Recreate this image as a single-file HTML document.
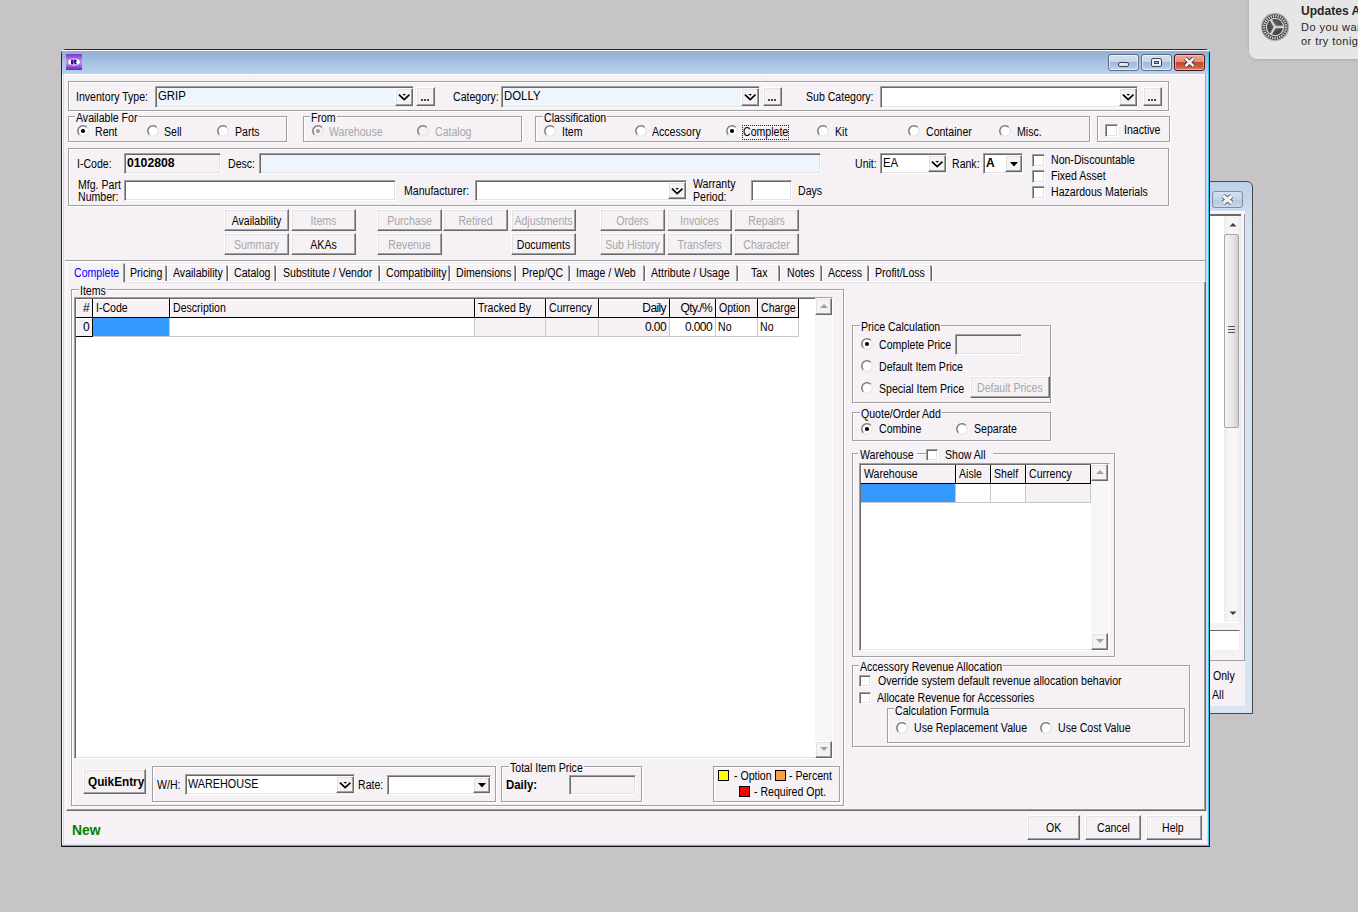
<!DOCTYPE html><html><head><meta charset="utf-8"><style>
html,body{margin:0;padding:0;width:1358px;height:912px;overflow:hidden;background:#c6c4c7;position:relative}
body div,body svg{position:absolute;box-sizing:border-box}
.t{font-family:"Liberation Sans",sans-serif;font-size:12px;line-height:14px;white-space:nowrap;transform-origin:0 0}
</style></head><body>
<div style="left:1249px;top:-10px;width:121px;height:69px;background:#e7e6e7;border-radius:8px;box-shadow:0 1px 3px rgba(0,0,0,.12)"></div>
<svg style="left:1260px;top:12px" width="30" height="30" viewBox="0 0 30 30"><defs><radialGradient id="gr" cx=".5" cy=".4" r=".6"><stop offset="0" stop-color="#6a6a6a"/><stop offset="1" stop-color="#3a3a3a"/></radialGradient></defs><circle cx="15" cy="15" r="14.2" fill="#a9b6bd"/><circle cx="15" cy="15" r="12.8" fill="#3c3c3c"/><circle cx="15" cy="15" r="11" fill="none" stroke="#d6d4ce" stroke-width="2.4" stroke-dasharray="1.3 1.05"/><circle cx="15" cy="15" r="9.3" fill="#cfcdc7"/><circle cx="15" cy="15" r="8" fill="url(#gr)"/><path d="M15 15L23.2 15M15 15L10.9 7.9M15 15L10.9 22.1" stroke="#d2d0ca" stroke-width="2.3"/><circle cx="15" cy="15" r="1.6" fill="#d2d0ca"/></svg>
<div class="t" style="left:1301px;top:4px;color:#262626;font-weight:bold;font-size:13px;transform:scaleX(0.93);">Updates A</div>
<div class="t" style="left:1301px;top:20px;color:#262626;font-size:11px;transform:scaleX(1);letter-spacing:0.45px">Do you war</div>
<div class="t" style="left:1301px;top:34px;color:#262626;font-size:11px;transform:scaleX(1);letter-spacing:0.45px">or try tonig</div>
<div style="left:1190px;top:181px;width:63px;height:533px;background:linear-gradient(#bdd0e6,#d3e2f2 40px,#d6e4f3);border:1px solid #4a4a4a;border-radius:0 6px 0 0"></div>
<div style="left:1212px;top:191px;width:31px;height:17px;background:linear-gradient(#d7e2ef,#c3d3e6 50%,#b6c9df 51%,#c9d8ea);border:1px solid #7d8fa8;border-radius:3px"></div>
<svg style="left:1221px;top:194px" width="13" height="11" viewBox="0 0 13 11"><path d="M2.3 2L10.7 9M10.7 2L2.3 9" stroke="#56606e" stroke-width="5"/><path d="M2.3 2L10.7 9M10.7 2L2.3 9" stroke="#f4f4f4" stroke-width="3.2"/></svg>
<div style="left:1190px;top:211px;width:55px;height:495px;background:#f5f1f5;border-top:1px solid #fff"></div>
<div style="left:1190px;top:214px;width:51px;height:409px;background:#fff;border-top:2px solid #6a6a6a"></div>
<div style="left:1224px;top:216px;width:17px;height:406px;background:linear-gradient(90deg,#ececec,#f6f6f6 30%,#f6f6f6 70%,#ececec)"></div>
<svg style="left:1229px;top:222px" width="8" height="5" viewBox="0 0 8 5"><polygon points="0.5,4.5 4,1 7.5,4.5" fill="#404040"/></svg>
<div style="left:1224px;top:234px;width:15px;height:194px;background:linear-gradient(90deg,#f4f4f4,#e6e6e6 60%,#cfcfcf);border:1px solid #a7a7a7;border-radius:2px"></div>
<div style="left:1228px;top:326px;width:7px;height:1px;background:#555"></div>
<div style="left:1228px;top:329px;width:7px;height:1px;background:#555"></div>
<div style="left:1228px;top:332px;width:7px;height:1px;background:#555"></div>
<svg style="left:1229px;top:611px" width="8" height="5" viewBox="0 0 8 5"><polygon points="0.5,0.5 7.5,0.5 4,4" fill="#404040"/></svg>
<div style="left:1190px;top:630px;width:50px;height:21px;background:#fff;border:1px solid;border-color:#696969 #eee #eee #696969"></div>
<div style="left:1190px;top:660px;width:55px;height:1px;background:#a0a0a0"></div>
<div style="left:1244px;top:214px;width:1px;height:447px;background:#a0a0a0"></div>
<div class="t" style="left:1213px;top:669px;color:#000;font-size:12px;transform:scaleX(0.88);">Only</div>
<div class="t" style="left:1212px;top:688px;color:#000;font-size:12px;transform:scaleX(0.88);">All</div>
<div style="left:61px;top:49px;width:1149px;height:798px;background:#c7ddf2;border:1px solid #1e2a24;border-radius:5px 5px 0 0;border-right-color:#111;border-bottom-color:#111"></div>
<div style="left:62px;top:50px;width:1147px;height:1px;background:#fff"></div>
<div style="left:62px;top:51px;width:1147px;height:23px;background:linear-gradient(#94b0d2,#9ab8d6 25%,#aac5e5 55%,#b3cfea 90%,#b7d2ee)"></div>
<div style="left:1208px;top:51px;width:1px;height:795px;background:#32c8f4"></div>
<div style="left:62px;top:845px;width:1147px;height:1px;background:#32c8f4"></div>
<div style="left:62px;top:74px;width:1146px;height:771px;background:#f5f1f5;border-top:1px solid #fff"></div>
<div style="left:62px;top:74px;width:1px;height:771px;background:#fff"></div>
<div style="left:63px;top:74px;width:1px;height:771px;background:#c4dcf4"></div>
<div style="left:1205px;top:74px;width:1px;height:208px;background:#a0a0a0"></div>
<div style="left:1206px;top:74px;width:1px;height:737px;background:#c4dcf4"></div>
<div style="left:1207px;top:74px;width:1px;height:771px;background:#d4ddf2"></div>
<div style="left:62px;top:844px;width:1146px;height:1px;background:#dcdcf0"></div>
<svg style="left:66px;top:54px" width="16" height="16" viewBox="0 0 16 16"><defs><linearGradient id="ig" x1="0" y1="0" x2="0" y2="1"><stop offset="0" stop-color="#7b2fd0"/><stop offset=".5" stop-color="#c9a8f0"/><stop offset="1" stop-color="#6c1fc4"/></linearGradient></defs><rect width="16" height="16" fill="url(#ig)"/><ellipse cx="8" cy="8" rx="6.5" ry="4" fill="#fff" stroke="#8a4ad8" stroke-width=".8"/><path d="M5 5.6h2.2v4.8H5z M7.6 5.6h2.4a1.5 1.5 0 0 1 0 2.6l1.3 2.2h-1.6l-1-1.8v1.8H7.6z" fill="#3a0aa0"/></svg>
<div style="left:1108px;top:54px;width:31px;height:17px;background:linear-gradient(#d2dfee,#c6d6ea 45%,#9fb7d4 46%,#adc4df 75%,#c6daf0);border:1px solid #5a6c8a;border-radius:3px;box-shadow:inset 0 0 0 1px rgba(255,255,255,.6)"></div>
<div style="left:1141px;top:54px;width:31px;height:17px;background:linear-gradient(#d2dfee,#c6d6ea 45%,#9fb7d4 46%,#adc4df 75%,#c6daf0);border:1px solid #5a6c8a;border-radius:3px;box-shadow:inset 0 0 0 1px rgba(255,255,255,.6)"></div>
<div style="left:1118px;top:62px;width:11px;height:5px;background:#e8e8e8;border:1px solid #3c4658;border-radius:2px"></div>
<div style="left:1151px;top:58px;width:11px;height:9px;background:#f0f0f0;border:1px solid #3c4658;border-radius:2px"></div>
<div style="left:1154px;top:61px;width:5px;height:3px;background:#9ab4d2;border:1px solid #3c4658"></div>
<div style="left:1174px;top:54px;width:31px;height:17px;background:linear-gradient(#eaa698,#de9383 45%,#c2472a 46%,#ca583b 75%,#dc866f);border:1px solid #4e1418;border-radius:3px;box-shadow:inset 0 0 0 1px rgba(255,220,210,.5)"></div>
<svg style="left:1183px;top:56px" width="13" height="13" viewBox="0 0 13 13"><path d="M2.5 2.5L10.5 10M10.5 2.5L2.5 10" stroke="#3e2a2e" stroke-width="4.2"/><path d="M2.5 2.5L10.5 10M10.5 2.5L2.5 10" stroke="#fafafa" stroke-width="2.4"/></svg>
<div style="left:65px;top:260px;width:1140px;height:1px;background:#a0a0a0"></div>
<div style="left:65px;top:261px;width:1140px;height:1px;background:#fff"></div>
<div style="left:69px;top:82px;width:1101px;height:30px;border:1px solid #fff"></div>
<div style="left:68px;top:81px;width:1101px;height:30px;border:1px solid #a0a0a0"></div>
<div class="t" style="left:76px;top:90px;color:#000;font-size:12px;transform:scaleX(0.88);">Inventory Type:</div>
<div style="left:155px;top:86px;width:259px;height:22px;background:#eef5fd;border:1px solid;border-color:#a0a0a0 #fff #fff #a0a0a0;box-shadow:inset 1px 1px #696969,inset -1px -1px #e3e3e3"></div>
<div class="t" style="left:158px;top:89px;color:#000;font-size:12px;transform:scaleX(0.95);">GRIP</div>
<div style="left:395px;top:88px;width:18px;height:18px;background:#f5f1f5;border:1px solid;border-color:#fff #696969 #696969 #fff;box-shadow:inset -1px -1px #a0a0a0,inset 1px 1px #e3e3e3"></div>
<svg style="left:398.0px;top:92.0px" width="12" height="10" viewBox="0 0 12 10"><polyline points="0.9,2.6 6.2,7.6 11.5,2.6" fill="none" stroke="#000" stroke-width="1.7"/><polygon points="4.4,2 8,2 6.2,3.8" fill="#000"/></svg>
<div style="left:416px;top:87px;width:19px;height:19px;background:#f5f1f5;border:1px solid;border-color:#fff #696969 #696969 #fff;box-shadow:inset -1px -1px #a0a0a0,inset 1px 1px #e3e3e3"></div>
<div style="left:421px;top:99px;width:2px;height:2px;background:#444"></div>
<div style="left:424px;top:99px;width:2px;height:2px;background:#444"></div>
<div style="left:427px;top:99px;width:2px;height:2px;background:#444"></div>
<div class="t" style="left:453px;top:90px;color:#000;font-size:12px;transform:scaleX(0.88);">Category:</div>
<div style="left:501px;top:86px;width:259px;height:22px;background:#eef5fd;border:1px solid;border-color:#a0a0a0 #fff #fff #a0a0a0;box-shadow:inset 1px 1px #696969,inset -1px -1px #e3e3e3"></div>
<div class="t" style="left:504px;top:89px;color:#000;font-size:12px;transform:scaleX(0.95);">DOLLY</div>
<div style="left:741px;top:88px;width:18px;height:18px;background:#f5f1f5;border:1px solid;border-color:#fff #696969 #696969 #fff;box-shadow:inset -1px -1px #a0a0a0,inset 1px 1px #e3e3e3"></div>
<svg style="left:744.0px;top:92.0px" width="12" height="10" viewBox="0 0 12 10"><polyline points="0.9,2.6 6.2,7.6 11.5,2.6" fill="none" stroke="#000" stroke-width="1.7"/><polygon points="4.4,2 8,2 6.2,3.8" fill="#000"/></svg>
<div style="left:763px;top:87px;width:19px;height:19px;background:#f5f1f5;border:1px solid;border-color:#fff #696969 #696969 #fff;box-shadow:inset -1px -1px #a0a0a0,inset 1px 1px #e3e3e3"></div>
<div style="left:768px;top:99px;width:2px;height:2px;background:#444"></div>
<div style="left:771px;top:99px;width:2px;height:2px;background:#444"></div>
<div style="left:774px;top:99px;width:2px;height:2px;background:#444"></div>
<div class="t" style="left:806px;top:90px;color:#000;font-size:12px;transform:scaleX(0.88);">Sub Category:</div>
<div style="left:880px;top:86px;width:258px;height:22px;background:#fff;border:1px solid;border-color:#a0a0a0 #fff #fff #a0a0a0;box-shadow:inset 1px 1px #696969,inset -1px -1px #e3e3e3"></div>
<div style="left:1119px;top:88px;width:18px;height:18px;background:#f5f1f5;border:1px solid;border-color:#fff #696969 #696969 #fff;box-shadow:inset -1px -1px #a0a0a0,inset 1px 1px #e3e3e3"></div>
<svg style="left:1122.0px;top:92.0px" width="12" height="10" viewBox="0 0 12 10"><polyline points="0.9,2.6 6.2,7.6 11.5,2.6" fill="none" stroke="#000" stroke-width="1.7"/><polygon points="4.4,2 8,2 6.2,3.8" fill="#000"/></svg>
<div style="left:1143px;top:87px;width:19px;height:19px;background:#f5f1f5;border:1px solid;border-color:#fff #696969 #696969 #fff;box-shadow:inset -1px -1px #a0a0a0,inset 1px 1px #e3e3e3"></div>
<div style="left:1148px;top:99px;width:2px;height:2px;background:#444"></div>
<div style="left:1151px;top:99px;width:2px;height:2px;background:#444"></div>
<div style="left:1154px;top:99px;width:2px;height:2px;background:#444"></div>
<div style="left:69px;top:117px;width:219px;height:26px;border:1px solid #fff"></div>
<div style="left:68px;top:116px;width:219px;height:26px;border:1px solid #a0a0a0"></div>
<div style="left:75px;top:115px;width:63px;height:4px;background:#f5f1f5"></div>
<div class="t" style="left:76px;top:111px;color:#000;font-size:12px;transform:scaleX(0.88);">Available For</div>
<svg style="left:77px;top:125px" width="12" height="12" viewBox="0 0 12 12"><circle cx="6" cy="6" r="5.2" fill="#fff"/><path d="M9.68 2.32A5.2 5.2 0 0 1 2.32 9.68" fill="none" stroke="#e6e6e6" stroke-width="1.3"/><path d="M2.32 9.68A5.2 5.2 0 0 1 9.68 2.32" fill="none" stroke="#7c7c7c" stroke-width="1.5"/><circle cx="6" cy="6" r="2.1" fill="#000"/></svg>
<div class="t" style="left:95px;top:125px;color:#000;font-size:12px;transform:scaleX(0.88);">Rent</div>
<svg style="left:147px;top:125px" width="12" height="12" viewBox="0 0 12 12"><circle cx="6" cy="6" r="5.2" fill="#fff"/><path d="M9.68 2.32A5.2 5.2 0 0 1 2.32 9.68" fill="none" stroke="#e6e6e6" stroke-width="1.3"/><path d="M2.32 9.68A5.2 5.2 0 0 1 9.68 2.32" fill="none" stroke="#7c7c7c" stroke-width="1.5"/></svg>
<div class="t" style="left:164px;top:125px;color:#000;font-size:12px;transform:scaleX(0.88);">Sell</div>
<svg style="left:217px;top:125px" width="12" height="12" viewBox="0 0 12 12"><circle cx="6" cy="6" r="5.2" fill="#fff"/><path d="M9.68 2.32A5.2 5.2 0 0 1 2.32 9.68" fill="none" stroke="#e6e6e6" stroke-width="1.3"/><path d="M2.32 9.68A5.2 5.2 0 0 1 9.68 2.32" fill="none" stroke="#7c7c7c" stroke-width="1.5"/></svg>
<div class="t" style="left:235px;top:125px;color:#000;font-size:12px;transform:scaleX(0.88);">Parts</div>
<div style="left:304px;top:117px;width:219px;height:26px;border:1px solid #fff"></div>
<div style="left:303px;top:116px;width:219px;height:26px;border:1px solid #a0a0a0"></div>
<div style="left:310px;top:115px;width:27px;height:4px;background:#f5f1f5"></div>
<div class="t" style="left:311px;top:111px;color:#000;font-size:12px;transform:scaleX(0.88);">From</div>
<svg style="left:312px;top:125px" width="12" height="12" viewBox="0 0 12 12"><circle cx="6" cy="6" r="5.2" fill="#f5f1f5"/><path d="M9.68 2.32A5.2 5.2 0 0 1 2.32 9.68" fill="none" stroke="#e6e6e6" stroke-width="1.3"/><path d="M2.32 9.68A5.2 5.2 0 0 1 9.68 2.32" fill="none" stroke="#7c7c7c" stroke-width="1.5"/><circle cx="6" cy="6" r="2.1" fill="#a0a0a0"/></svg>
<div class="t" style="left:329px;top:125px;color:#a7a7a7;font-size:12px;transform:scaleX(0.88);">Warehouse</div>
<svg style="left:417px;top:125px" width="12" height="12" viewBox="0 0 12 12"><circle cx="6" cy="6" r="5.2" fill="#f5f1f5"/><path d="M9.68 2.32A5.2 5.2 0 0 1 2.32 9.68" fill="none" stroke="#e6e6e6" stroke-width="1.3"/><path d="M2.32 9.68A5.2 5.2 0 0 1 9.68 2.32" fill="none" stroke="#7c7c7c" stroke-width="1.5"/></svg>
<div class="t" style="left:435px;top:125px;color:#a7a7a7;font-size:12px;transform:scaleX(0.88);">Catalog</div>
<div style="left:536px;top:117px;width:555px;height:26px;border:1px solid #fff"></div>
<div style="left:535px;top:116px;width:555px;height:26px;border:1px solid #a0a0a0"></div>
<div style="left:543px;top:115px;width:64px;height:4px;background:#f5f1f5"></div>
<div class="t" style="left:544px;top:111px;color:#000;font-size:12px;transform:scaleX(0.88);">Classification</div>
<svg style="left:544px;top:125px" width="12" height="12" viewBox="0 0 12 12"><circle cx="6" cy="6" r="5.2" fill="#fff"/><path d="M9.68 2.32A5.2 5.2 0 0 1 2.32 9.68" fill="none" stroke="#e6e6e6" stroke-width="1.3"/><path d="M2.32 9.68A5.2 5.2 0 0 1 9.68 2.32" fill="none" stroke="#7c7c7c" stroke-width="1.5"/></svg>
<div class="t" style="left:562px;top:125px;color:#000;font-size:12px;transform:scaleX(0.88);">Item</div>
<svg style="left:635px;top:125px" width="12" height="12" viewBox="0 0 12 12"><circle cx="6" cy="6" r="5.2" fill="#fff"/><path d="M9.68 2.32A5.2 5.2 0 0 1 2.32 9.68" fill="none" stroke="#e6e6e6" stroke-width="1.3"/><path d="M2.32 9.68A5.2 5.2 0 0 1 9.68 2.32" fill="none" stroke="#7c7c7c" stroke-width="1.5"/></svg>
<div class="t" style="left:652px;top:125px;color:#000;font-size:12px;transform:scaleX(0.88);">Accessory</div>
<svg style="left:726px;top:125px" width="12" height="12" viewBox="0 0 12 12"><circle cx="6" cy="6" r="5.2" fill="#fff"/><path d="M9.68 2.32A5.2 5.2 0 0 1 2.32 9.68" fill="none" stroke="#e6e6e6" stroke-width="1.3"/><path d="M2.32 9.68A5.2 5.2 0 0 1 9.68 2.32" fill="none" stroke="#7c7c7c" stroke-width="1.5"/><circle cx="6" cy="6" r="2.1" fill="#000"/></svg>
<div class="t" style="left:743px;top:125px;color:#000;font-size:12px;transform:scaleX(0.88);">Complete</div>
<div style="left:742px;top:125px;width:47px;height:15px;border:1px dotted #222"></div>
<svg style="left:817px;top:125px" width="12" height="12" viewBox="0 0 12 12"><circle cx="6" cy="6" r="5.2" fill="#fff"/><path d="M9.68 2.32A5.2 5.2 0 0 1 2.32 9.68" fill="none" stroke="#e6e6e6" stroke-width="1.3"/><path d="M2.32 9.68A5.2 5.2 0 0 1 9.68 2.32" fill="none" stroke="#7c7c7c" stroke-width="1.5"/></svg>
<div class="t" style="left:835px;top:125px;color:#000;font-size:12px;transform:scaleX(0.88);">Kit</div>
<svg style="left:908px;top:125px" width="12" height="12" viewBox="0 0 12 12"><circle cx="6" cy="6" r="5.2" fill="#fff"/><path d="M9.68 2.32A5.2 5.2 0 0 1 2.32 9.68" fill="none" stroke="#e6e6e6" stroke-width="1.3"/><path d="M2.32 9.68A5.2 5.2 0 0 1 9.68 2.32" fill="none" stroke="#7c7c7c" stroke-width="1.5"/></svg>
<div class="t" style="left:926px;top:125px;color:#000;font-size:12px;transform:scaleX(0.88);">Container</div>
<svg style="left:999px;top:125px" width="12" height="12" viewBox="0 0 12 12"><circle cx="6" cy="6" r="5.2" fill="#fff"/><path d="M9.68 2.32A5.2 5.2 0 0 1 2.32 9.68" fill="none" stroke="#e6e6e6" stroke-width="1.3"/><path d="M2.32 9.68A5.2 5.2 0 0 1 9.68 2.32" fill="none" stroke="#7c7c7c" stroke-width="1.5"/></svg>
<div class="t" style="left:1017px;top:125px;color:#000;font-size:12px;transform:scaleX(0.88);">Misc.</div>
<div style="left:1098px;top:117px;width:73px;height:26px;border:1px solid #fff"></div>
<div style="left:1097px;top:116px;width:73px;height:26px;border:1px solid #a0a0a0"></div>
<div style="left:1105px;top:124px;width:13px;height:13px;background:#fff;border:1px solid;border-color:#a0a0a0 #fff #fff #a0a0a0;box-shadow:inset 1px 1px #696969,inset -1px -1px #e3e3e3"></div>
<div class="t" style="left:1124px;top:123px;color:#000;font-size:12px;transform:scaleX(0.88);">Inactive</div>
<div style="left:69px;top:149px;width:1101px;height:58px;border:1px solid #fff"></div>
<div style="left:68px;top:148px;width:1101px;height:58px;border:1px solid #a0a0a0"></div>
<div class="t" style="left:77px;top:157px;color:#000;font-size:12px;transform:scaleX(0.88);">I-Code:</div>
<div style="left:124px;top:153px;width:97px;height:21px;background:#f5f1f5;border:1px solid;border-color:#a0a0a0 #fff #fff #a0a0a0;box-shadow:inset 1px 1px #696969,inset -1px -1px #e3e3e3"></div>
<div class="t" style="left:127px;top:156px;color:#000;font-weight:bold;font-size:12px;transform:scaleX(1.02);">0102808</div>
<div class="t" style="left:228px;top:157px;color:#000;font-size:12px;transform:scaleX(0.88);">Desc:</div>
<div style="left:259px;top:153px;width:562px;height:21px;background:#eef5fd;border:1px solid;border-color:#a0a0a0 #fff #fff #a0a0a0;box-shadow:inset 1px 1px #696969,inset -1px -1px #e3e3e3"></div>
<div class="t" style="left:855px;top:157px;color:#000;font-size:12px;transform:scaleX(0.88);">Unit:</div>
<div style="left:880px;top:153px;width:67px;height:21px;background:#fff;border:1px solid;border-color:#a0a0a0 #fff #fff #a0a0a0;box-shadow:inset 1px 1px #696969,inset -1px -1px #e3e3e3"></div>
<div class="t" style="left:883px;top:156px;color:#000;font-size:12px;transform:scaleX(0.95);">EA</div>
<div style="left:928px;top:155px;width:18px;height:17px;background:#f5f1f5;border:1px solid;border-color:#fff #696969 #696969 #fff;box-shadow:inset -1px -1px #a0a0a0,inset 1px 1px #e3e3e3"></div>
<svg style="left:931.0px;top:158.5px" width="12" height="10" viewBox="0 0 12 10"><polyline points="0.9,2.6 6.2,7.6 11.5,2.6" fill="none" stroke="#000" stroke-width="1.7"/><polygon points="4.4,2 8,2 6.2,3.8" fill="#000"/></svg>
<div class="t" style="left:952px;top:157px;color:#000;font-size:12px;transform:scaleX(0.88);">Rank:</div>
<div style="left:983px;top:153px;width:40px;height:21px;background:#fff;border:1px solid;border-color:#a0a0a0 #fff #fff #a0a0a0;box-shadow:inset 1px 1px #696969,inset -1px -1px #e3e3e3"></div>
<div class="t" style="left:986px;top:156px;color:#000;font-weight:bold;font-size:12px;transform:scaleX(1);">A</div>
<div style="left:1005px;top:155px;width:17px;height:17px;background:#f5f1f5;border:1px solid;border-color:#fff #696969 #696969 #fff;box-shadow:inset -1px -1px #a0a0a0,inset 1px 1px #e3e3e3"></div>
<svg style="left:1009.5px;top:161.5px" width="8" height="5" viewBox="0 0 8 5"><polygon points="0,0 8,0 4,4.5" fill="#000"/></svg>
<div style="left:1032px;top:154px;width:13px;height:13px;background:#fff;border:1px solid;border-color:#a0a0a0 #fff #fff #a0a0a0;box-shadow:inset 1px 1px #696969,inset -1px -1px #e3e3e3"></div>
<div class="t" style="left:1051px;top:153px;color:#000;font-size:12px;transform:scaleX(0.88);">Non-Discountable</div>
<div style="left:1032px;top:170px;width:13px;height:13px;background:#fff;border:1px solid;border-color:#a0a0a0 #fff #fff #a0a0a0;box-shadow:inset 1px 1px #696969,inset -1px -1px #e3e3e3"></div>
<div class="t" style="left:1051px;top:169px;color:#000;font-size:12px;transform:scaleX(0.88);">Fixed Asset</div>
<div style="left:1032px;top:186px;width:13px;height:13px;background:#fff;border:1px solid;border-color:#a0a0a0 #fff #fff #a0a0a0;box-shadow:inset 1px 1px #696969,inset -1px -1px #e3e3e3"></div>
<div class="t" style="left:1051px;top:185px;color:#000;font-size:12px;transform:scaleX(0.88);">Hazardous Materials</div>
<div class="t" style="left:78px;top:178px;color:#000;font-size:12px;transform:scaleX(0.88);">Mfg. Part</div>
<div class="t" style="left:78px;top:190px;color:#000;font-size:12px;transform:scaleX(0.88);">Number:</div>
<div style="left:124px;top:180px;width:272px;height:21px;background:#fff;border:1px solid;border-color:#a0a0a0 #fff #fff #a0a0a0;box-shadow:inset 1px 1px #696969,inset -1px -1px #e3e3e3"></div>
<div class="t" style="left:404px;top:184px;color:#000;font-size:12px;transform:scaleX(0.88);">Manufacturer:</div>
<div style="left:475px;top:180px;width:212px;height:21px;background:#fff;border:1px solid;border-color:#a0a0a0 #fff #fff #a0a0a0;box-shadow:inset 1px 1px #696969,inset -1px -1px #e3e3e3"></div>
<div style="left:668px;top:182px;width:18px;height:17px;background:#f5f1f5;border:1px solid;border-color:#fff #696969 #696969 #fff;box-shadow:inset -1px -1px #a0a0a0,inset 1px 1px #e3e3e3"></div>
<svg style="left:671.0px;top:185.5px" width="12" height="10" viewBox="0 0 12 10"><polyline points="0.9,2.6 6.2,7.6 11.5,2.6" fill="none" stroke="#000" stroke-width="1.7"/><polygon points="4.4,2 8,2 6.2,3.8" fill="#000"/></svg>
<div class="t" style="left:693px;top:177px;color:#000;font-size:12px;transform:scaleX(0.88);">Warranty</div>
<div class="t" style="left:693px;top:190px;color:#000;font-size:12px;transform:scaleX(0.88);">Period:</div>
<div style="left:751px;top:180px;width:41px;height:21px;background:#fff;border:1px solid;border-color:#a0a0a0 #fff #fff #a0a0a0;box-shadow:inset 1px 1px #696969,inset -1px -1px #e3e3e3"></div>
<div class="t" style="left:798px;top:184px;color:#000;font-size:12px;transform:scaleX(0.88);">Days</div>
<div style="left:224px;top:209px;width:65px;height:22px;background:#f5f1f5;border:1px solid;border-color:#fff #696969 #696969 #fff;box-shadow:inset -1px -1px #a0a0a0,inset 1px 1px #e3e3e3"></div>
<div class="t" style="left:224px;top:214px;width:73.86363636363636px;text-align:center;color:#000;transform:scaleX(.88)">Availability</div>
<div style="left:291px;top:209px;width:65px;height:22px;background:#f5f1f5;border:1px solid;border-color:#fff #696969 #696969 #fff;box-shadow:inset -1px -1px #a0a0a0,inset 1px 1px #e3e3e3"></div>
<div class="t" style="left:291px;top:214px;width:73.86363636363636px;text-align:center;color:#a7a7a7;transform:scaleX(.88)">Items</div>
<div style="left:377px;top:209px;width:65px;height:22px;background:#f5f1f5;border:1px solid;border-color:#fff #696969 #696969 #fff;box-shadow:inset -1px -1px #a0a0a0,inset 1px 1px #e3e3e3"></div>
<div class="t" style="left:377px;top:214px;width:73.86363636363636px;text-align:center;color:#a7a7a7;transform:scaleX(.88)">Purchase</div>
<div style="left:443px;top:209px;width:65px;height:22px;background:#f5f1f5;border:1px solid;border-color:#fff #696969 #696969 #fff;box-shadow:inset -1px -1px #a0a0a0,inset 1px 1px #e3e3e3"></div>
<div class="t" style="left:443px;top:214px;width:73.86363636363636px;text-align:center;color:#a7a7a7;transform:scaleX(.88)">Retired</div>
<div style="left:511px;top:209px;width:65px;height:22px;background:#f5f1f5;border:1px solid;border-color:#fff #696969 #696969 #fff;box-shadow:inset -1px -1px #a0a0a0,inset 1px 1px #e3e3e3"></div>
<div class="t" style="left:511px;top:214px;width:73.86363636363636px;text-align:center;color:#a7a7a7;transform:scaleX(.88)">Adjustments</div>
<div style="left:600px;top:209px;width:65px;height:22px;background:#f5f1f5;border:1px solid;border-color:#fff #696969 #696969 #fff;box-shadow:inset -1px -1px #a0a0a0,inset 1px 1px #e3e3e3"></div>
<div class="t" style="left:600px;top:214px;width:73.86363636363636px;text-align:center;color:#a7a7a7;transform:scaleX(.88)">Orders</div>
<div style="left:667px;top:209px;width:65px;height:22px;background:#f5f1f5;border:1px solid;border-color:#fff #696969 #696969 #fff;box-shadow:inset -1px -1px #a0a0a0,inset 1px 1px #e3e3e3"></div>
<div class="t" style="left:667px;top:214px;width:73.86363636363636px;text-align:center;color:#a7a7a7;transform:scaleX(.88)">Invoices</div>
<div style="left:734px;top:209px;width:65px;height:22px;background:#f5f1f5;border:1px solid;border-color:#fff #696969 #696969 #fff;box-shadow:inset -1px -1px #a0a0a0,inset 1px 1px #e3e3e3"></div>
<div class="t" style="left:734px;top:214px;width:73.86363636363636px;text-align:center;color:#a7a7a7;transform:scaleX(.88)">Repairs</div>
<div style="left:224px;top:233px;width:65px;height:22px;background:#f5f1f5;border:1px solid;border-color:#fff #696969 #696969 #fff;box-shadow:inset -1px -1px #a0a0a0,inset 1px 1px #e3e3e3"></div>
<div class="t" style="left:224px;top:238px;width:73.86363636363636px;text-align:center;color:#a7a7a7;transform:scaleX(.88)">Summary</div>
<div style="left:291px;top:233px;width:65px;height:22px;background:#f5f1f5;border:1px solid;border-color:#fff #696969 #696969 #fff;box-shadow:inset -1px -1px #a0a0a0,inset 1px 1px #e3e3e3"></div>
<div class="t" style="left:291px;top:238px;width:73.86363636363636px;text-align:center;color:#000;transform:scaleX(.88)">AKAs</div>
<div style="left:377px;top:233px;width:65px;height:22px;background:#f5f1f5;border:1px solid;border-color:#fff #696969 #696969 #fff;box-shadow:inset -1px -1px #a0a0a0,inset 1px 1px #e3e3e3"></div>
<div class="t" style="left:377px;top:238px;width:73.86363636363636px;text-align:center;color:#a7a7a7;transform:scaleX(.88)">Revenue</div>
<div style="left:511px;top:233px;width:65px;height:22px;background:#f5f1f5;border:1px solid;border-color:#fff #696969 #696969 #fff;box-shadow:inset -1px -1px #a0a0a0,inset 1px 1px #e3e3e3"></div>
<div class="t" style="left:511px;top:238px;width:73.86363636363636px;text-align:center;color:#000;transform:scaleX(.88)">Documents</div>
<div style="left:600px;top:233px;width:65px;height:22px;background:#f5f1f5;border:1px solid;border-color:#fff #696969 #696969 #fff;box-shadow:inset -1px -1px #a0a0a0,inset 1px 1px #e3e3e3"></div>
<div class="t" style="left:600px;top:238px;width:73.86363636363636px;text-align:center;color:#a7a7a7;transform:scaleX(.88)">Sub History</div>
<div style="left:667px;top:233px;width:65px;height:22px;background:#f5f1f5;border:1px solid;border-color:#fff #696969 #696969 #fff;box-shadow:inset -1px -1px #a0a0a0,inset 1px 1px #e3e3e3"></div>
<div class="t" style="left:667px;top:238px;width:73.86363636363636px;text-align:center;color:#a7a7a7;transform:scaleX(.88)">Transfers</div>
<div style="left:734px;top:233px;width:65px;height:22px;background:#f5f1f5;border:1px solid;border-color:#fff #696969 #696969 #fff;box-shadow:inset -1px -1px #a0a0a0,inset 1px 1px #e3e3e3"></div>
<div class="t" style="left:734px;top:238px;width:73.86363636363636px;text-align:center;color:#a7a7a7;transform:scaleX(.88)">Character</div>
<div style="left:66px;top:281px;width:1140px;height:530px;border:1px solid;border-color:#fff #696969 #696969 #fff;box-shadow:inset -1px -1px #a0a0a0"></div>
<div style="left:67px;top:282px;width:1137px;height:1px;background:#e3e3e3"></div>
<div style="left:66px;top:262px;width:58px;height:21px;background:#f5f1f5;border-left:1px solid #fff;border-top:1px solid #fff"></div>
<div style="left:123px;top:263px;width:1px;height:19px;background:#a0a0a0"></div>
<div style="left:124px;top:264px;width:1px;height:18px;background:#696969"></div>
<div class="t" style="left:74px;top:266px;color:#0000ff;font-size:12px;transform:scaleX(0.88);">Complete</div>
<div style="left:125px;top:264px;width:41px;height:1px;background:#fff"></div>
<div style="left:165px;top:265px;width:1px;height:16px;background:#a0a0a0"></div>
<div style="left:166px;top:266px;width:1px;height:15px;background:#696969"></div>
<div style="left:167px;top:265px;width:1px;height:16px;background:#fff"></div>
<div class="t" style="left:130px;top:266px;color:#000;font-size:12px;transform:scaleX(0.88);">Pricing</div>
<div style="left:167px;top:264px;width:60px;height:1px;background:#fff"></div>
<div style="left:226px;top:265px;width:1px;height:16px;background:#a0a0a0"></div>
<div style="left:227px;top:266px;width:1px;height:15px;background:#696969"></div>
<div style="left:228px;top:265px;width:1px;height:16px;background:#fff"></div>
<div class="t" style="left:173px;top:266px;color:#000;font-size:12px;transform:scaleX(0.88);">Availability</div>
<div style="left:228px;top:264px;width:47px;height:1px;background:#fff"></div>
<div style="left:274px;top:265px;width:1px;height:16px;background:#a0a0a0"></div>
<div style="left:275px;top:266px;width:1px;height:15px;background:#696969"></div>
<div style="left:276px;top:265px;width:1px;height:16px;background:#fff"></div>
<div class="t" style="left:234px;top:266px;color:#000;font-size:12px;transform:scaleX(0.88);">Catalog</div>
<div style="left:276px;top:264px;width:103px;height:1px;background:#fff"></div>
<div style="left:378px;top:265px;width:1px;height:16px;background:#a0a0a0"></div>
<div style="left:379px;top:266px;width:1px;height:15px;background:#696969"></div>
<div style="left:380px;top:265px;width:1px;height:16px;background:#fff"></div>
<div class="t" style="left:283px;top:266px;color:#000;font-size:12px;transform:scaleX(0.88);">Substitute / Vendor</div>
<div style="left:380px;top:264px;width:69px;height:1px;background:#fff"></div>
<div style="left:448px;top:265px;width:1px;height:16px;background:#a0a0a0"></div>
<div style="left:449px;top:266px;width:1px;height:15px;background:#696969"></div>
<div style="left:450px;top:265px;width:1px;height:16px;background:#fff"></div>
<div class="t" style="left:386px;top:266px;color:#000;font-size:12px;transform:scaleX(0.88);">Compatibility</div>
<div style="left:450px;top:264px;width:65px;height:1px;background:#fff"></div>
<div style="left:514px;top:265px;width:1px;height:16px;background:#a0a0a0"></div>
<div style="left:515px;top:266px;width:1px;height:15px;background:#696969"></div>
<div style="left:516px;top:265px;width:1px;height:16px;background:#fff"></div>
<div class="t" style="left:456px;top:266px;color:#000;font-size:12px;transform:scaleX(0.88);">Dimensions</div>
<div style="left:516px;top:264px;width:53px;height:1px;background:#fff"></div>
<div style="left:568px;top:265px;width:1px;height:16px;background:#a0a0a0"></div>
<div style="left:569px;top:266px;width:1px;height:15px;background:#696969"></div>
<div style="left:570px;top:265px;width:1px;height:16px;background:#fff"></div>
<div class="t" style="left:522px;top:266px;color:#000;font-size:12px;transform:scaleX(0.88);">Prep/QC</div>
<div style="left:570px;top:264px;width:74px;height:1px;background:#fff"></div>
<div style="left:643px;top:265px;width:1px;height:16px;background:#a0a0a0"></div>
<div style="left:644px;top:266px;width:1px;height:15px;background:#696969"></div>
<div style="left:645px;top:265px;width:1px;height:16px;background:#fff"></div>
<div class="t" style="left:576px;top:266px;color:#000;font-size:12px;transform:scaleX(0.88);">Image / Web</div>
<div style="left:645px;top:264px;width:92px;height:1px;background:#fff"></div>
<div style="left:736px;top:265px;width:1px;height:16px;background:#a0a0a0"></div>
<div style="left:737px;top:266px;width:1px;height:15px;background:#696969"></div>
<div style="left:738px;top:265px;width:1px;height:16px;background:#fff"></div>
<div class="t" style="left:651px;top:266px;color:#000;font-size:12px;transform:scaleX(0.88);">Attribute / Usage</div>
<div style="left:738px;top:264px;width:41px;height:1px;background:#fff"></div>
<div style="left:778px;top:265px;width:1px;height:16px;background:#a0a0a0"></div>
<div style="left:779px;top:266px;width:1px;height:15px;background:#696969"></div>
<div style="left:780px;top:265px;width:1px;height:16px;background:#fff"></div>
<div class="t" style="left:751px;top:266px;color:#000;font-size:12px;transform:scaleX(0.88);">Tax</div>
<div style="left:780px;top:264px;width:41px;height:1px;background:#fff"></div>
<div style="left:820px;top:265px;width:1px;height:16px;background:#a0a0a0"></div>
<div style="left:821px;top:266px;width:1px;height:15px;background:#696969"></div>
<div style="left:822px;top:265px;width:1px;height:16px;background:#fff"></div>
<div class="t" style="left:787px;top:266px;color:#000;font-size:12px;transform:scaleX(0.88);">Notes</div>
<div style="left:822px;top:264px;width:46px;height:1px;background:#fff"></div>
<div style="left:867px;top:265px;width:1px;height:16px;background:#a0a0a0"></div>
<div style="left:868px;top:266px;width:1px;height:15px;background:#696969"></div>
<div style="left:869px;top:265px;width:1px;height:16px;background:#fff"></div>
<div class="t" style="left:828px;top:266px;color:#000;font-size:12px;transform:scaleX(0.88);">Access</div>
<div style="left:869px;top:264px;width:62px;height:1px;background:#fff"></div>
<div style="left:930px;top:265px;width:1px;height:16px;background:#a0a0a0"></div>
<div style="left:931px;top:266px;width:1px;height:15px;background:#696969"></div>
<div style="left:932px;top:265px;width:1px;height:16px;background:#fff"></div>
<div class="t" style="left:875px;top:266px;color:#000;font-size:12px;transform:scaleX(0.88);">Profit/Loss</div>
<div style="left:72px;top:290px;width:773px;height:517px;border:1px solid #fff"></div>
<div style="left:71px;top:289px;width:773px;height:517px;border:1px solid #a0a0a0"></div>
<div style="left:79px;top:288px;width:28px;height:4px;background:#f5f1f5"></div>
<div class="t" style="left:80px;top:284px;color:#000;font-size:12px;transform:scaleX(0.88);">Items</div>
<div style="left:74px;top:297px;width:759px;height:462px;background:#fff;border:1px solid;border-color:#a0a0a0 #fff #fff #a0a0a0;box-shadow:inset 1px 1px #696969,inset -1px -1px #e3e3e3"></div>
<div style="left:76px;top:299px;width:17px;height:19px;background:#f5f1f5;border-right:1px solid #000;border-bottom:1px solid #000;box-shadow:inset 1px 1px #fff"></div>
<div class="t" style="left:-111px;top:301px;width:200px;text-align:right;transform:none;letter-spacing:-0.6px">#</div>
<div style="left:93px;top:299px;width:77px;height:19px;background:#f5f1f5;border-right:1px solid #000;border-bottom:1px solid #000;box-shadow:inset 1px 1px #fff"></div>
<div class="t" style="left:96px;top:301px;color:#000;font-size:12px;transform:scaleX(0.88);">I-Code</div>
<div style="left:170px;top:299px;width:305px;height:19px;background:#f5f1f5;border-right:1px solid #000;border-bottom:1px solid #000;box-shadow:inset 1px 1px #fff"></div>
<div class="t" style="left:173px;top:301px;color:#000;font-size:12px;transform:scaleX(0.88);">Description</div>
<div style="left:475px;top:299px;width:71px;height:19px;background:#f5f1f5;border-right:1px solid #000;border-bottom:1px solid #000;box-shadow:inset 1px 1px #fff"></div>
<div class="t" style="left:478px;top:301px;color:#000;font-size:12px;transform:scaleX(0.88);">Tracked By</div>
<div style="left:546px;top:299px;width:53px;height:19px;background:#f5f1f5;border-right:1px solid #000;border-bottom:1px solid #000;box-shadow:inset 1px 1px #fff"></div>
<div class="t" style="left:549px;top:301px;color:#000;font-size:12px;transform:scaleX(0.88);">Currency</div>
<div style="left:599px;top:299px;width:71px;height:19px;background:#f5f1f5;border-right:1px solid #000;border-bottom:1px solid #000;box-shadow:inset 1px 1px #fff"></div>
<div class="t" style="left:466px;top:301px;width:200px;text-align:right;transform:none;letter-spacing:-0.6px">Daily</div>
<div style="left:670px;top:299px;width:46px;height:19px;background:#f5f1f5;border-right:1px solid #000;border-bottom:1px solid #000;box-shadow:inset 1px 1px #fff"></div>
<div class="t" style="left:512px;top:301px;width:200px;text-align:right;transform:none;letter-spacing:-0.6px">Qty./%</div>
<div style="left:716px;top:299px;width:42px;height:19px;background:#f5f1f5;border-right:1px solid #000;border-bottom:1px solid #000;box-shadow:inset 1px 1px #fff"></div>
<div class="t" style="left:719px;top:301px;color:#000;font-size:12px;transform:scaleX(0.88);">Option</div>
<div style="left:758px;top:299px;width:41px;height:19px;background:#f5f1f5;border-right:1px solid #000;border-bottom:1px solid #000;box-shadow:inset 1px 1px #fff"></div>
<div class="t" style="left:761px;top:301px;color:#000;font-size:12px;transform:scaleX(0.88);">Charge</div>
<div style="left:76px;top:318px;width:17px;height:19px;background:#f5f1f5;border-right:1px solid #000;border-bottom:1px solid #000;box-shadow:inset 1px 1px #fff"></div>
<div class="t" style="left:-111px;top:320px;width:200px;text-align:right;letter-spacing:-0.6px">0</div>
<div style="left:93px;top:318px;width:77px;height:19px;background:#3399ff;border-right:1px solid #c8c8c8;border-bottom:1px solid #c8c8c8"></div>
<div style="left:170px;top:318px;width:305px;height:19px;background:#fff;border-right:1px solid #c8c8c8;border-bottom:1px solid #c8c8c8"></div>
<div style="left:475px;top:318px;width:71px;height:19px;background:#f5f1f5;border-right:1px solid #c8c8c8;border-bottom:1px solid #c8c8c8"></div>
<div style="left:546px;top:318px;width:53px;height:19px;background:#f5f1f5;border-right:1px solid #c8c8c8;border-bottom:1px solid #c8c8c8"></div>
<div style="left:599px;top:318px;width:71px;height:19px;background:#f5f1f5;border-right:1px solid #c8c8c8;border-bottom:1px solid #c8c8c8"></div>
<div class="t" style="left:466px;top:320px;width:200px;text-align:right;letter-spacing:-0.6px">0.00</div>
<div style="left:670px;top:318px;width:46px;height:19px;background:#fff;border-right:1px solid #c8c8c8;border-bottom:1px solid #c8c8c8"></div>
<div class="t" style="left:512px;top:320px;width:200px;text-align:right;letter-spacing:-0.6px">0.000</div>
<div style="left:716px;top:318px;width:42px;height:19px;background:#fff;border-right:1px solid #c8c8c8;border-bottom:1px solid #c8c8c8"></div>
<div class="t" style="left:718px;top:320px;color:#000;font-size:12px;transform:scaleX(0.88);">No</div>
<div style="left:758px;top:318px;width:41px;height:19px;background:#fff;border-right:1px solid #c8c8c8;border-bottom:1px solid #c8c8c8"></div>
<div class="t" style="left:760px;top:320px;color:#000;font-size:12px;transform:scaleX(0.88);">No</div>
<div style="left:815px;top:298px;width:17px;height:459px;background:#f7f5f7"></div>
<div style="left:815px;top:298px;width:17px;height:17px;background:#f5f1f5;border:1px solid;border-color:#fff #696969 #696969 #fff;box-shadow:inset -1px -1px #a0a0a0,inset 1px 1px #e3e3e3"></div>
<svg style="left:820px;top:304px" width="8" height="5" viewBox="0 0 8 5"><polygon points="0,4 4,0 8,4" fill="#a0a0a0"/></svg>
<div style="left:815px;top:741px;width:17px;height:17px;background:#f5f1f5;border:1px solid;border-color:#fff #696969 #696969 #fff;box-shadow:inset -1px -1px #a0a0a0,inset 1px 1px #e3e3e3"></div>
<svg style="left:820px;top:747px" width="8" height="5" viewBox="0 0 8 5"><polygon points="0,0 8,0 4,4" fill="#a0a0a0"/></svg>
<div style="left:83px;top:769px;width:63px;height:25px;background:#f5f1f5;border:1px solid;border-color:#fff #696969 #696969 #fff;box-shadow:inset -1px -1px #a0a0a0,inset 1px 1px #e3e3e3"></div>
<div class="t" style="left:88px;top:775px;color:#000;font-weight:bold;font-size:12px;transform:scaleX(0.98);">QuikEntry</div>
<div style="left:153px;top:767px;width:344px;height:36px;border:1px solid #fff"></div>
<div style="left:152px;top:766px;width:344px;height:36px;border:1px solid #a0a0a0"></div>
<div class="t" style="left:157px;top:778px;color:#000;font-size:12px;transform:scaleX(0.88);">W/H:</div>
<div style="left:185px;top:774px;width:170px;height:21px;background:#fff;border:1px solid;border-color:#a0a0a0 #fff #fff #a0a0a0;box-shadow:inset 1px 1px #696969,inset -1px -1px #e3e3e3"></div>
<div class="t" style="left:188px;top:777px;color:#000;font-size:12px;transform:scaleX(0.9);">WAREHOUSE</div>
<div style="left:336px;top:776px;width:18px;height:17px;background:#f5f1f5;border:1px solid;border-color:#fff #696969 #696969 #fff;box-shadow:inset -1px -1px #a0a0a0,inset 1px 1px #e3e3e3"></div>
<svg style="left:339.0px;top:779.5px" width="12" height="10" viewBox="0 0 12 10"><polyline points="0.9,2.6 6.2,7.6 11.5,2.6" fill="none" stroke="#000" stroke-width="1.7"/><polygon points="4.4,2 8,2 6.2,3.8" fill="#000"/></svg>
<div class="t" style="left:358px;top:778px;color:#000;font-size:12px;transform:scaleX(0.88);">Rate:</div>
<div style="left:387px;top:775px;width:104px;height:20px;background:#fff;border:1px solid;border-color:#a0a0a0 #fff #fff #a0a0a0;box-shadow:inset 1px 1px #696969,inset -1px -1px #e3e3e3"></div>
<div style="left:473px;top:777px;width:17px;height:16px;background:#f5f1f5;border:1px solid;border-color:#fff #696969 #696969 #fff;box-shadow:inset -1px -1px #a0a0a0,inset 1px 1px #e3e3e3"></div>
<svg style="left:477.5px;top:783.0px" width="8" height="5" viewBox="0 0 8 5"><polygon points="0,0 8,0 4,4.5" fill="#000"/></svg>
<div style="left:502px;top:767px;width:141px;height:36px;border:1px solid #fff"></div>
<div style="left:501px;top:766px;width:141px;height:36px;border:1px solid #a0a0a0"></div>
<div style="left:509px;top:765px;width:75px;height:4px;background:#f5f1f5"></div>
<div class="t" style="left:510px;top:761px;color:#000;font-size:12px;transform:scaleX(0.88);">Total Item Price</div>
<div class="t" style="left:506px;top:778px;color:#000;font-weight:bold;font-size:12px;transform:scaleX(0.95);">Daily:</div>
<div style="left:569px;top:775px;width:67px;height:20px;background:#f5f1f5;border:1px solid;border-color:#a0a0a0 #fff #fff #a0a0a0;box-shadow:inset 1px 1px #696969,inset -1px -1px #e3e3e3"></div>
<div style="left:714px;top:767px;width:127px;height:36px;border:1px solid #fff"></div>
<div style="left:713px;top:766px;width:127px;height:36px;border:1px solid #a0a0a0"></div>
<div style="left:718px;top:770px;width:11px;height:11px;background:#ffff00;border:1px solid #000"></div>
<div class="t" style="left:734px;top:769px;color:#000;font-size:12px;transform:scaleX(0.88);">- Option</div>
<div style="left:775px;top:770px;width:11px;height:11px;background:#f8a048;border:1px solid #000"></div>
<div class="t" style="left:789px;top:769px;color:#000;font-size:12px;transform:scaleX(0.88);">- Percent</div>
<div style="left:739px;top:786px;width:11px;height:11px;background:#ff0000;border:1px solid #000"></div>
<div class="t" style="left:754px;top:785px;color:#000;font-size:12px;transform:scaleX(0.88);">- Required Opt.</div>
<div style="left:853px;top:326px;width:199px;height:78px;border:1px solid #fff"></div>
<div style="left:852px;top:325px;width:199px;height:78px;border:1px solid #a0a0a0"></div>
<div style="left:860px;top:324px;width:81px;height:4px;background:#f5f1f5"></div>
<div class="t" style="left:861px;top:320px;color:#000;font-size:12px;transform:scaleX(0.88);">Price Calculation</div>
<svg style="left:861px;top:338px" width="12" height="12" viewBox="0 0 12 12"><circle cx="6" cy="6" r="5.2" fill="#fff"/><path d="M9.68 2.32A5.2 5.2 0 0 1 2.32 9.68" fill="none" stroke="#e6e6e6" stroke-width="1.3"/><path d="M2.32 9.68A5.2 5.2 0 0 1 9.68 2.32" fill="none" stroke="#7c7c7c" stroke-width="1.5"/><circle cx="6" cy="6" r="2.1" fill="#000"/></svg>
<div class="t" style="left:879px;top:338px;color:#000;font-size:12px;transform:scaleX(0.88);">Complete Price</div>
<div style="left:955px;top:334px;width:67px;height:21px;background:#f5f1f5;border:1px solid;border-color:#a0a0a0 #fff #fff #a0a0a0;box-shadow:inset 1px 1px #696969,inset -1px -1px #e3e3e3"></div>
<svg style="left:861px;top:360px" width="12" height="12" viewBox="0 0 12 12"><circle cx="6" cy="6" r="5.2" fill="#fff"/><path d="M9.68 2.32A5.2 5.2 0 0 1 2.32 9.68" fill="none" stroke="#e6e6e6" stroke-width="1.3"/><path d="M2.32 9.68A5.2 5.2 0 0 1 9.68 2.32" fill="none" stroke="#7c7c7c" stroke-width="1.5"/></svg>
<div class="t" style="left:879px;top:360px;color:#000;font-size:12px;transform:scaleX(0.88);">Default Item Price</div>
<svg style="left:861px;top:382px" width="12" height="12" viewBox="0 0 12 12"><circle cx="6" cy="6" r="5.2" fill="#fff"/><path d="M9.68 2.32A5.2 5.2 0 0 1 2.32 9.68" fill="none" stroke="#e6e6e6" stroke-width="1.3"/><path d="M2.32 9.68A5.2 5.2 0 0 1 9.68 2.32" fill="none" stroke="#7c7c7c" stroke-width="1.5"/></svg>
<div class="t" style="left:879px;top:382px;color:#000;font-size:12px;transform:scaleX(0.88);">Special Item Price</div>
<div style="left:970px;top:376px;width:80px;height:22px;background:#f5f1f5;border:1px solid;border-color:#fff #696969 #696969 #fff;box-shadow:inset -1px -1px #a0a0a0,inset 1px 1px #e3e3e3"></div>
<div class="t" style="left:977px;top:381px;color:#a7a7a7;font-size:12px;transform:scaleX(0.88);">Default Prices</div>
<div style="left:853px;top:413px;width:199px;height:29px;border:1px solid #fff"></div>
<div style="left:852px;top:412px;width:199px;height:29px;border:1px solid #a0a0a0"></div>
<div style="left:860px;top:411px;width:82px;height:4px;background:#f5f1f5"></div>
<div class="t" style="left:861px;top:407px;color:#000;font-size:12px;transform:scaleX(0.88);">Quote/Order Add</div>
<svg style="left:861px;top:423px" width="12" height="12" viewBox="0 0 12 12"><circle cx="6" cy="6" r="5.2" fill="#fff"/><path d="M9.68 2.32A5.2 5.2 0 0 1 2.32 9.68" fill="none" stroke="#e6e6e6" stroke-width="1.3"/><path d="M2.32 9.68A5.2 5.2 0 0 1 9.68 2.32" fill="none" stroke="#7c7c7c" stroke-width="1.5"/><circle cx="6" cy="6" r="2.1" fill="#000"/></svg>
<div class="t" style="left:879px;top:422px;color:#000;font-size:12px;transform:scaleX(0.88);">Combine</div>
<svg style="left:956px;top:423px" width="12" height="12" viewBox="0 0 12 12"><circle cx="6" cy="6" r="5.2" fill="#fff"/><path d="M9.68 2.32A5.2 5.2 0 0 1 2.32 9.68" fill="none" stroke="#e6e6e6" stroke-width="1.3"/><path d="M2.32 9.68A5.2 5.2 0 0 1 9.68 2.32" fill="none" stroke="#7c7c7c" stroke-width="1.5"/></svg>
<div class="t" style="left:974px;top:422px;color:#000;font-size:12px;transform:scaleX(0.88);">Separate</div>
<div style="left:853px;top:454px;width:263px;height:204px;border:1px solid #fff"></div>
<div style="left:852px;top:453px;width:263px;height:204px;border:1px solid #a0a0a0"></div>
<div style="left:858px;top:449px;width:59px;height:9px;background:#f5f1f5"></div>
<div style="left:937px;top:449px;width:56px;height:9px;background:#f5f1f5"></div>
<div class="t" style="left:860px;top:448px;color:#000;font-size:12px;transform:scaleX(0.88);">Warehouse</div>
<div style="left:926px;top:449px;width:12px;height:12px;background:#fff;border:1px solid;border-color:#a0a0a0 #fff #fff #a0a0a0;box-shadow:inset 1px 1px #696969,inset -1px -1px #e3e3e3"></div>
<div class="t" style="left:945px;top:448px;color:#000;font-size:12px;transform:scaleX(0.88);">Show All</div>
<div style="left:859px;top:463px;width:251px;height:188px;background:#fff;border:1px solid;border-color:#a0a0a0 #fff #fff #a0a0a0;box-shadow:inset 1px 1px #696969,inset -1px -1px #e3e3e3"></div>
<div style="left:861px;top:465px;width:95px;height:19px;background:#f5f1f5;border-right:1px solid #000;border-bottom:1px solid #000;box-shadow:inset 1px 1px #fff"></div>
<div class="t" style="left:864px;top:467px;color:#000;font-size:12px;transform:scaleX(0.88);">Warehouse</div>
<div style="left:956px;top:465px;width:35px;height:19px;background:#f5f1f5;border-right:1px solid #000;border-bottom:1px solid #000;box-shadow:inset 1px 1px #fff"></div>
<div class="t" style="left:959px;top:467px;color:#000;font-size:12px;transform:scaleX(0.88);">Aisle</div>
<div style="left:991px;top:465px;width:35px;height:19px;background:#f5f1f5;border-right:1px solid #000;border-bottom:1px solid #000;box-shadow:inset 1px 1px #fff"></div>
<div class="t" style="left:994px;top:467px;color:#000;font-size:12px;transform:scaleX(0.88);">Shelf</div>
<div style="left:1026px;top:465px;width:65px;height:19px;background:#f5f1f5;border-right:1px solid #000;border-bottom:1px solid #000;box-shadow:inset 1px 1px #fff"></div>
<div class="t" style="left:1029px;top:467px;color:#000;font-size:12px;transform:scaleX(0.88);">Currency</div>
<div style="left:861px;top:484px;width:95px;height:19px;background:#3399ff;border-right:1px solid #c8c8c8;border-bottom:1px solid #c8c8c8"></div>
<div style="left:956px;top:484px;width:35px;height:19px;background:#fff;border-right:1px solid #c8c8c8;border-bottom:1px solid #c8c8c8"></div>
<div style="left:991px;top:484px;width:35px;height:19px;background:#fff;border-right:1px solid #c8c8c8;border-bottom:1px solid #c8c8c8"></div>
<div style="left:1026px;top:484px;width:65px;height:19px;background:#f5f1f5;border-right:1px solid #c8c8c8;border-bottom:1px solid #c8c8c8"></div>
<div style="left:1091px;top:464px;width:18px;height:186px;background:#f7f5f7"></div>
<div style="left:1091px;top:464px;width:17px;height:17px;background:#f5f1f5;border:1px solid;border-color:#fff #696969 #696969 #fff;box-shadow:inset -1px -1px #a0a0a0,inset 1px 1px #e3e3e3"></div>
<svg style="left:1096px;top:470px" width="8" height="5" viewBox="0 0 8 5"><polygon points="0,4 4,0 8,4" fill="#a0a0a0"/></svg>
<div style="left:1091px;top:633px;width:17px;height:17px;background:#f5f1f5;border:1px solid;border-color:#fff #696969 #696969 #fff;box-shadow:inset -1px -1px #a0a0a0,inset 1px 1px #e3e3e3"></div>
<svg style="left:1096px;top:639px" width="8" height="5" viewBox="0 0 8 5"><polygon points="0,0 8,0 4,4" fill="#a0a0a0"/></svg>
<div style="left:853px;top:666px;width:338px;height:82px;border:1px solid #fff"></div>
<div style="left:852px;top:665px;width:338px;height:82px;border:1px solid #a0a0a0"></div>
<div style="left:859px;top:664px;width:144px;height:4px;background:#f5f1f5"></div>
<div class="t" style="left:860px;top:660px;color:#000;font-size:12px;transform:scaleX(0.88);">Accessory Revenue Allocation</div>
<div style="left:859px;top:675px;width:12px;height:12px;background:#fff;border:1px solid;border-color:#a0a0a0 #fff #fff #a0a0a0;box-shadow:inset 1px 1px #696969,inset -1px -1px #e3e3e3"></div>
<div class="t" style="left:878px;top:674px;color:#000;font-size:12px;transform:scaleX(0.88);">Override system default revenue allocation behavior</div>
<div style="left:859px;top:692px;width:12px;height:12px;background:#fff;border:1px solid;border-color:#a0a0a0 #fff #fff #a0a0a0;box-shadow:inset 1px 1px #696969,inset -1px -1px #e3e3e3"></div>
<div class="t" style="left:877px;top:691px;color:#000;font-size:12px;transform:scaleX(0.88);">Allocate Revenue for Accessories</div>
<div style="left:888px;top:709px;width:298px;height:35px;border:1px solid #fff"></div>
<div style="left:887px;top:708px;width:298px;height:35px;border:1px solid #a0a0a0"></div>
<div style="left:894px;top:707px;width:96px;height:4px;background:#f5f1f5"></div>
<div class="t" style="left:895px;top:704px;color:#000;font-size:12px;transform:scaleX(0.88);">Calculation Formula</div>
<svg style="left:896px;top:722px" width="12" height="12" viewBox="0 0 12 12"><circle cx="6" cy="6" r="5.2" fill="#fff"/><path d="M9.68 2.32A5.2 5.2 0 0 1 2.32 9.68" fill="none" stroke="#e6e6e6" stroke-width="1.3"/><path d="M2.32 9.68A5.2 5.2 0 0 1 9.68 2.32" fill="none" stroke="#7c7c7c" stroke-width="1.5"/></svg>
<div class="t" style="left:914px;top:721px;color:#000;font-size:12px;transform:scaleX(0.88);">Use Replacement Value</div>
<svg style="left:1040px;top:722px" width="12" height="12" viewBox="0 0 12 12"><circle cx="6" cy="6" r="5.2" fill="#fff"/><path d="M9.68 2.32A5.2 5.2 0 0 1 2.32 9.68" fill="none" stroke="#e6e6e6" stroke-width="1.3"/><path d="M2.32 9.68A5.2 5.2 0 0 1 9.68 2.32" fill="none" stroke="#7c7c7c" stroke-width="1.5"/></svg>
<div class="t" style="left:1058px;top:721px;color:#000;font-size:12px;transform:scaleX(0.88);">Use Cost Value</div>
<div class="t" style="left:72px;top:823px;color:#008000;font-weight:bold;font-size:14px;transform:scaleX(0.99);">New</div>
<div style="left:1027px;top:815px;width:53px;height:25px;background:#f5f1f5;border:1px solid;border-color:#fff #696969 #696969 #fff;box-shadow:inset -1px -1px #a0a0a0,inset 1px 1px #e3e3e3"></div>
<div class="t" style="left:1046px;top:821px;color:#000;font-size:12px;transform:scaleX(0.88);">OK</div>
<div style="left:1085px;top:815px;width:56px;height:25px;background:#f5f1f5;border:1px solid;border-color:#fff #696969 #696969 #fff;box-shadow:inset -1px -1px #a0a0a0,inset 1px 1px #e3e3e3"></div>
<div class="t" style="left:1097px;top:821px;color:#000;font-size:12px;transform:scaleX(0.88);">Cancel</div>
<div style="left:1146px;top:815px;width:56px;height:25px;background:#f5f1f5;border:1px solid;border-color:#fff #696969 #696969 #fff;box-shadow:inset -1px -1px #a0a0a0,inset 1px 1px #e3e3e3"></div>
<div class="t" style="left:1162px;top:821px;color:#000;font-size:12px;transform:scaleX(0.88);">Help</div>
</body></html>
